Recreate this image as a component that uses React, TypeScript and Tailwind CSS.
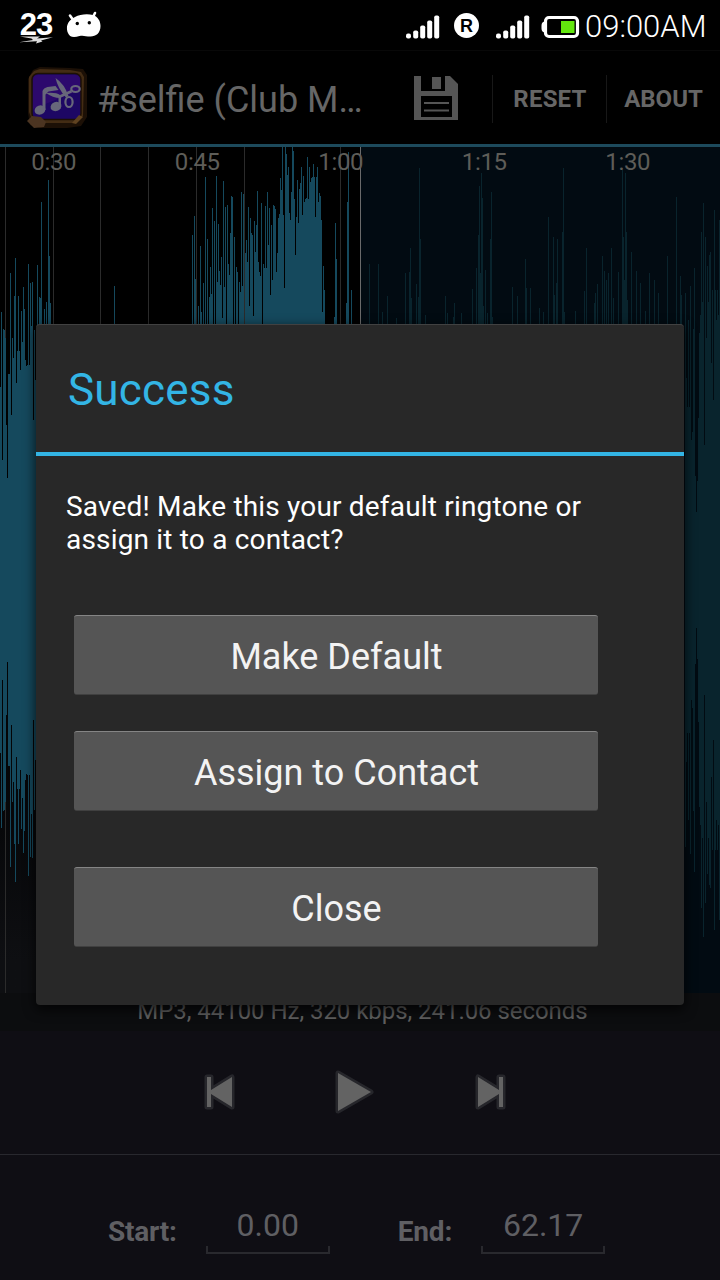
import type { ReactNode } from 'react'

// [x, top] for every column of the waveform, mirrored around CENTER
const PLAYED: [number, number][] = [
  [0, 387], [1, 312], [2, 460], [3, 329], [4, 330], [5, 338], [6, 425], [7, 478], [8, 374], [9, 374],
  [10, 273], [11, 415], [12, 338], [13, 358], [14, 296], [15, 258], [16, 383], [17, 351], [18, 296], [19, 351],
  [20, 370], [21, 311], [22, 342], [23, 287], [24, 309], [25, 360], [26, 366], [27, 365], [28, 264], [29, 365],
  [30, 283], [31, 326], [32, 282], [33, 420], [34, 330], [35, 380], [37, 265], [39, 297], [40, 298], [41, 202],
  [44, 309], [46, 302], [48, 180], [49, 256], [50, 303], [114, 286],
  [192, 235], [194, 216], [195, 279], [198, 306], [200, 246], [201, 312], [203, 283], [205, 177], [207, 239],
  [209, 297], [210, 267], [211, 294], [212, 208], [214, 221], [216, 176], [217, 282], [218, 224], [219, 271],
  [220, 285], [221, 257], [222, 318], [223, 181], [224, 287], [225, 207], [227, 205], [228, 264], [229, 275],
  [230, 233], [231, 196], [232, 197], [234, 237], [236, 267], [237, 272], [239, 282], [240, 292], [241, 192],
  [242, 286], [243, 194], [245, 253], [246, 240], [247, 262], [248, 207], [249, 306], [250, 218], [251, 233],
  [252, 235], [253, 316], [254, 221], [255, 252], [256, 225], [257, 191], [258, 262], [259, 272], [260, 276],
  [261, 203], [263, 264], [264, 268], [265, 206], [266, 268], [267, 192], [268, 245], [269, 208], [270, 295],
  [271, 225], [272, 280], [273, 205], [274, 206], [275, 209], [276, 272], [277, 253], [278, 218], [279, 214],
  [280, 178], [281, 190], [282, 147], [283, 215], [284, 288], [285, 147], [286, 154], [287, 175], [288, 167],
  [289, 213], [290, 220], [291, 192], [292, 147], [293, 151], [294, 199], [295, 255], [296, 217], [297, 180],
  [298, 223], [299, 189], [300, 183], [301, 167], [302, 215], [303, 176], [304, 202], [305, 199], [306, 198],
  [307, 157], [308, 199], [309, 167], [310, 182], [311, 178], [312, 177], [313, 164], [314, 177], [315, 217],
  [316, 177], [317, 167], [318, 202], [319, 193], [320, 196], [321, 220], [322, 312], [323, 266], [324, 290],
  [334, 317], [335, 223], [336, 259], [346, 303], [347, 202], [348, 152], [351, 290],
]

const UNPLAYED: [number, number][] = [
  [369, 264], [378, 264], [382, 312], [387, 296], [396, 318], [405, 273], [409, 272], [410, 248], [411, 298],
  [416, 284], [418, 297], [419, 168], [420, 239], [425, 315], [445, 296], [447, 313], [453, 317], [454, 303],
  [461, 313], [472, 289], [476, 268], [478, 235], [479, 186], [480, 273], [481, 173], [482, 198], [483, 306],
  [485, 270], [487, 313], [490, 239], [491, 192], [492, 317], [512, 287], [517, 296], [525, 259], [526, 288],
  [530, 288], [539, 308], [543, 312], [548, 217], [553, 237], [554, 295], [556, 283], [557, 239], [562, 232],
  [563, 168], [564, 312], [575, 311], [584, 291], [586, 248], [594, 303], [595, 293], [597, 284], [602, 256],
  [604, 271], [606, 280], [608, 273], [611, 248], [613, 298], [618, 272], [622, 170], [623, 237], [624, 280],
  [625, 173], [626, 232], [627, 300], [631, 252], [636, 271], [640, 283], [645, 311], [649, 273], [654, 280],
  [658, 293], [667, 256], [676, 197], [680, 276], [681, 295], [685, 293], [686, 378], [687, 407], [688, 320],
  [689, 407], [690, 286], [691, 440], [692, 432], [693, 329], [694, 268], [695, 476], [696, 512], [697, 481],
  [698, 418], [699, 333], [700, 315], [701, 232], [702, 302], [703, 203], [704, 445], [705, 237], [706, 338],
  [707, 266], [708, 302], [709, 255], [710, 252], [711, 363], [712, 290], [713, 400], [714, 210], [715, 290],
  [716, 320], [717, 290], [718, 315], [719, 220],
]

const CENTER = 570
const GRID = [5, 53, 100, 148, 196, 244, 292, 340]
const TIMES = ['0:30', '0:45', '1:00', '1:15', '1:30']

function columns(data: [number, number][]) {
  return data.map(([x, top]) => `M${x} ${top}h1V${2 * CENTER - top}h-1z`).join('')
}

function Signal() {
  return (
    <svg width="34" height="24" viewBox="0 0 34 24" fill="#fff">
      <rect x="0" y="18.5" width="5" height="5" rx="2" />
      <rect x="7.2" y="15.5" width="5" height="8" rx="1.8" />
      <rect x="14.2" y="10.5" width="5" height="13" rx="1.8" />
      <rect x="21.2" y="5.5" width="5" height="18" rx="1.8" />
      <rect x="28.2" y="0.5" width="5" height="23" rx="1.8" />
    </svg>
  )
}

function StatusBar() {
  return (
    <header className="flex h-[50px] shrink-0 items-start bg-black pl-5 text-white">
      <div className="flex w-8 flex-col items-center pt-[9px]">
        <span className="font-['Liberation_Sans',sans-serif] text-[31px] leading-[32px] font-bold tracking-[-1px]">23</span>
        <svg className="-mt-[5px] shrink-0" width="34" height="8" viewBox="0 0 34 8">
          <path d="M1 .5h20l-3 2.100 16-1.300L22 4.500l1.500 1-6.500 2 1-2.300L0 6.300l14-2.400-1.500-1.400z" fill="#ddd" />
        </svg>
      </div>
      <svg className="mt-[11px] ml-[14px]" width="36" height="28" viewBox="0 0 36 28">
        <path d="M4 4.500 7.500 9.500M29 2 26.500 7" stroke="#fff" strokeWidth="2.600" strokeLinecap="round" />
        <path d="M9 6c5-3 13-3.500 18-2 5 2 7.500 6 7.500 11 0 7-4.500 10.500-10 10.500-5 0-7-1.500-11-.5-6 2-10 1.500-12-4C-.5 14 3 9 9 6z" fill="#fff" />
        <circle cx="11.300" cy="12.500" r="1.700" />
        <circle cx="23.300" cy="11.800" r="1.700" />
      </svg>
      <div className="ml-auto flex items-start pr-[13px]">
        <div className="mt-[15px]"><Signal /></div>
        <div className="mt-[13px] ml-[14px] flex size-[25px] items-center justify-center rounded-full bg-white font-['Liberation_Sans',sans-serif] text-[18px] leading-none font-bold text-black">
          R
        </div>
        <div className="mt-[15px] ml-[17px]"><Signal /></div>
        <svg className="mt-[15px] ml-[11px]" width="39" height="24" viewBox="0 0 39 24">
          <path d="M4 6.500C1 7 .5 8 .5 12S1 17 4 17.500z" fill="#fff" />
          <rect x="4.500" y="2.500" width="32" height="19" rx="3.500" fill="none" stroke="#fff" strokeWidth="3.200" />
          <rect x="20" y="6" width="13.500" height="12" fill="#62e60d" />
        </svg>
        <span className="mt-[9px] ml-[5px] w-[122px] text-[31px] leading-9 font-light whitespace-nowrap">09:00AM</span>
      </div>
    </header>
  )
}

function AppIcon() {
  return (
    <svg width="62" height="64" viewBox="0 0 62 64">
      <path d="M7 3 14 0l30 1 13 1 4 6v42l-6 9-14 2H14l-10-3-2-12V12z" fill="#1c1006" />
      <path d="M8 4 14 2l30 1 11 2 3 5-1 39-7 7H14l-8-3-3-8V10z" fill="#432c14" />
      <rect x="6" y="6.500" width="49" height="46" rx="6" fill="#1d0764" stroke="#1d1005" strokeWidth="1.500" />
      <path d="M7 13q0-5 5-5h37q5 0 5 5v10L7 42z" fill="#330a70" opacity=".7" />
      <g fill="#67677a">
        <ellipse cx="14" cy="43" rx="5.500" ry="4.500" transform="rotate(-20 14 43)" />
        <ellipse cx="30" cy="39.500" rx="5.500" ry="4.500" transform="rotate(-20 30 39.500)" />
        <path d="M16.500 43V24q1-3 5-4l8-1 3 4-10 1.500-3 3V43z" />
        <path d="M32.500 39V28h2.500v12z" />
        <path d="M29.500 11q9 6 13 18l-2.500 1.500Q32 22 29.500 11z" />
        <path d="M20 26q10-1 14 2l11-5 1 2.500L34 31q-7 0-14-5z" />
      </g>
      <g fill="none" stroke="#67677a" strokeWidth="2.200">
        <ellipse cx="43" cy="35" rx="3.600" ry="5" />
        <ellipse cx="49.500" cy="22" rx="4.200" ry="3" />
      </g>
      <path d="m1 54 5-5 9 1 5 5-2 5-10 1z" fill="#4b3421" />
      <path d="m53 48 4 2-7 7-4-1z" fill="#5f4220" />
    </svg>
  )
}

function ActionBar() {
  return (
    <div className="flex h-[97px] shrink-0 items-center border-t border-b-[3px] border-t-[#080808] border-b-[#1d4a5c] bg-black pt-[3px] pl-[26px] text-[#666]">
      <AppIcon />
      <h1 className="ml-[9px] w-[316px] pt-[2px] text-[36px] whitespace-nowrap">#selfie (Club M…</h1>
      <svg width="46" height="46" viewBox="0 0 46 46">
        <path d="M1 0h36l8 8v36H1z" fill="#555" />
        <path d="M8 0h24v15H8z" fill="#000" />
        <path d="M19 1h9v12h-9z" fill="#555" />
        <path d="M8 20h31v21H8z" fill="#000" />
        <path d="M11 27h25M11 34.500h25" stroke="#555" strokeWidth="2" />
      </svg>
      <div className="ml-[33px] h-12 w-px bg-[#181818]" />
      <button type="button" className="w-[113px] pl-px text-center text-[24px] font-bold tracking-[0.2px]">RESET</button>
      <div className="h-12 w-px bg-[#181818]" />
      <button type="button" className="w-[113px] text-center text-[24px] font-bold">ABOUT</button>
    </div>
  )
}

function Waveform() {
  return (
    <div className="relative h-[846px] shrink-0">
      <svg className="block" width="720" height="846" viewBox="0 147 720 846" shapeRendering="crispEdges">
        <rect x="361" y="147" width="359" height="846" fill="#020b12" />
        {GRID.map((x) => (
          <rect key={x} x={x} y="147" width="1" height="846" fill="#2b2b2b" />
        ))}
        <path d={columns(PLAYED)} fill="#15495d" />
        <path d={columns(UNPLAYED)} fill="#09242d" />
        <rect x="360" y="147" width="1" height="846" fill="#6a6a6a" />
      </svg>
      <div className="absolute top-0 left-[-18px] flex text-[24px] leading-[30px] tracking-[-0.3px] text-[#5e5d58]">
        {TIMES.map((t) => (
          <span key={t} className="w-[143.500px] text-center">{t}</span>
        ))}
      </div>
    </div>
  )
}

function Controls() {
  return (
    <div className="flex h-[124px] shrink-0 items-center justify-center border-b border-[#28282e] bg-[#0f0e14] pr-[10px] pb-[2px]">
      <div className="flex w-[306px] items-center justify-between">
        <svg width="36" height="40" viewBox="0 0 36 40" fill="#636363" stroke="#26262b" strokeWidth="5" strokeLinejoin="round" paintOrder="stroke">
          <path d="M5 5h4v13L30 5v30L9 22v13H5z" />
        </svg>
        <svg className="mr-[2px]" width="44" height="46" viewBox="0 0 44 46" fill="#636363" stroke="#26262b" strokeWidth="5" strokeLinejoin="round" paintOrder="stroke">
          <path d="M6 4v38l33-19z" />
        </svg>
        <svg width="36" height="40" viewBox="0 0 36 40" fill="#636363" stroke="#26262b" strokeWidth="5" strokeLinejoin="round" paintOrder="stroke">
          <path d="M31 5h-4v13L6 5v30l21-13v13h4z" />
        </svg>
      </div>
    </div>
  )
}

function TimeField({ label, value }: { label: string; value: string }) {
  return (
    <label className="flex items-start">
      <span className="pt-[9px] text-[28px] leading-9 font-bold tracking-[-0.200px]">{label}</span>
      <span className="ml-[29px] flex w-[124px] flex-col">
        <span className="text-center text-[32px] leading-[41px]">{value}</span>
        <span className="h-[8px] border-2 border-t-0 border-[#29292e]" />
      </span>
    </label>
  )
}

function DialogButton({ children }: { children: ReactNode }) {
  return (
    <button
      type="button"
      className="h-20 w-[524px] rounded-[3px] border-t border-b border-t-[#858585] border-b-[#404040] bg-[#555] pt-1 pl-px text-center text-[36px] text-[#f3f3f3]"
    >
      {children}
    </button>
  )
}

function SuccessDialog() {
  return (
    <div
      role="dialog"
      className="absolute top-[324px] left-9 h-[681px] w-[648px] rounded-[4px] border-t border-[#414141] bg-[#282828] shadow-[0_4px_12px_1px_rgba(0,0,0,0.7)]"
    >
      <h2 className="h-[131px] border-b-4 border-[#33b5e5] pt-10 pl-8 text-[44px] leading-[50px] tracking-[0.2px] text-[#33b5e5]">
        Success
      </h2>
      <p className="pt-[34px] pl-[30px] text-[28px] leading-[33px] tracking-[0.18px] text-white">
        Saved! Make this your default ringtone or
        <br />
        assign it to a contact?
      </p>
      <div className="flex flex-col pt-[59px] pl-[38px]">
        <DialogButton>Make Default</DialogButton>
        <div className="h-9" />
        <DialogButton>Assign to Contact</DialogButton>
        <div className="h-14" />
        <DialogButton>Close</DialogButton>
      </div>
    </div>
  )
}

export default function App() {
  return (
    <div className="relative flex h-[1280px] w-[720px] flex-col overflow-hidden bg-gradient-to-b from-black from-25% to-[#0e0f12] to-75% font-[Roboto,sans-serif]">
      <StatusBar />
      <ActionBar />
      <Waveform />
      <div className="flex h-[38px] shrink-0 items-center justify-center bg-[#0c0d0f] pb-[2px] pl-[5px] text-[24px] tracking-[-0.05px] text-[#5f5f5f]">
        MP3, 44100 Hz, 320 kbps, 241.06 seconds
      </div>
      <Controls />
      <div className="flex flex-1 gap-[68px] bg-[#0f0e14] pt-[50px] pl-[108px] text-[#5f5f63]">
        <TimeField label="Start:" value="0.00" />
        <TimeField label="End:" value="62.17" />
      </div>
      <SuccessDialog />
    </div>
  )
}
